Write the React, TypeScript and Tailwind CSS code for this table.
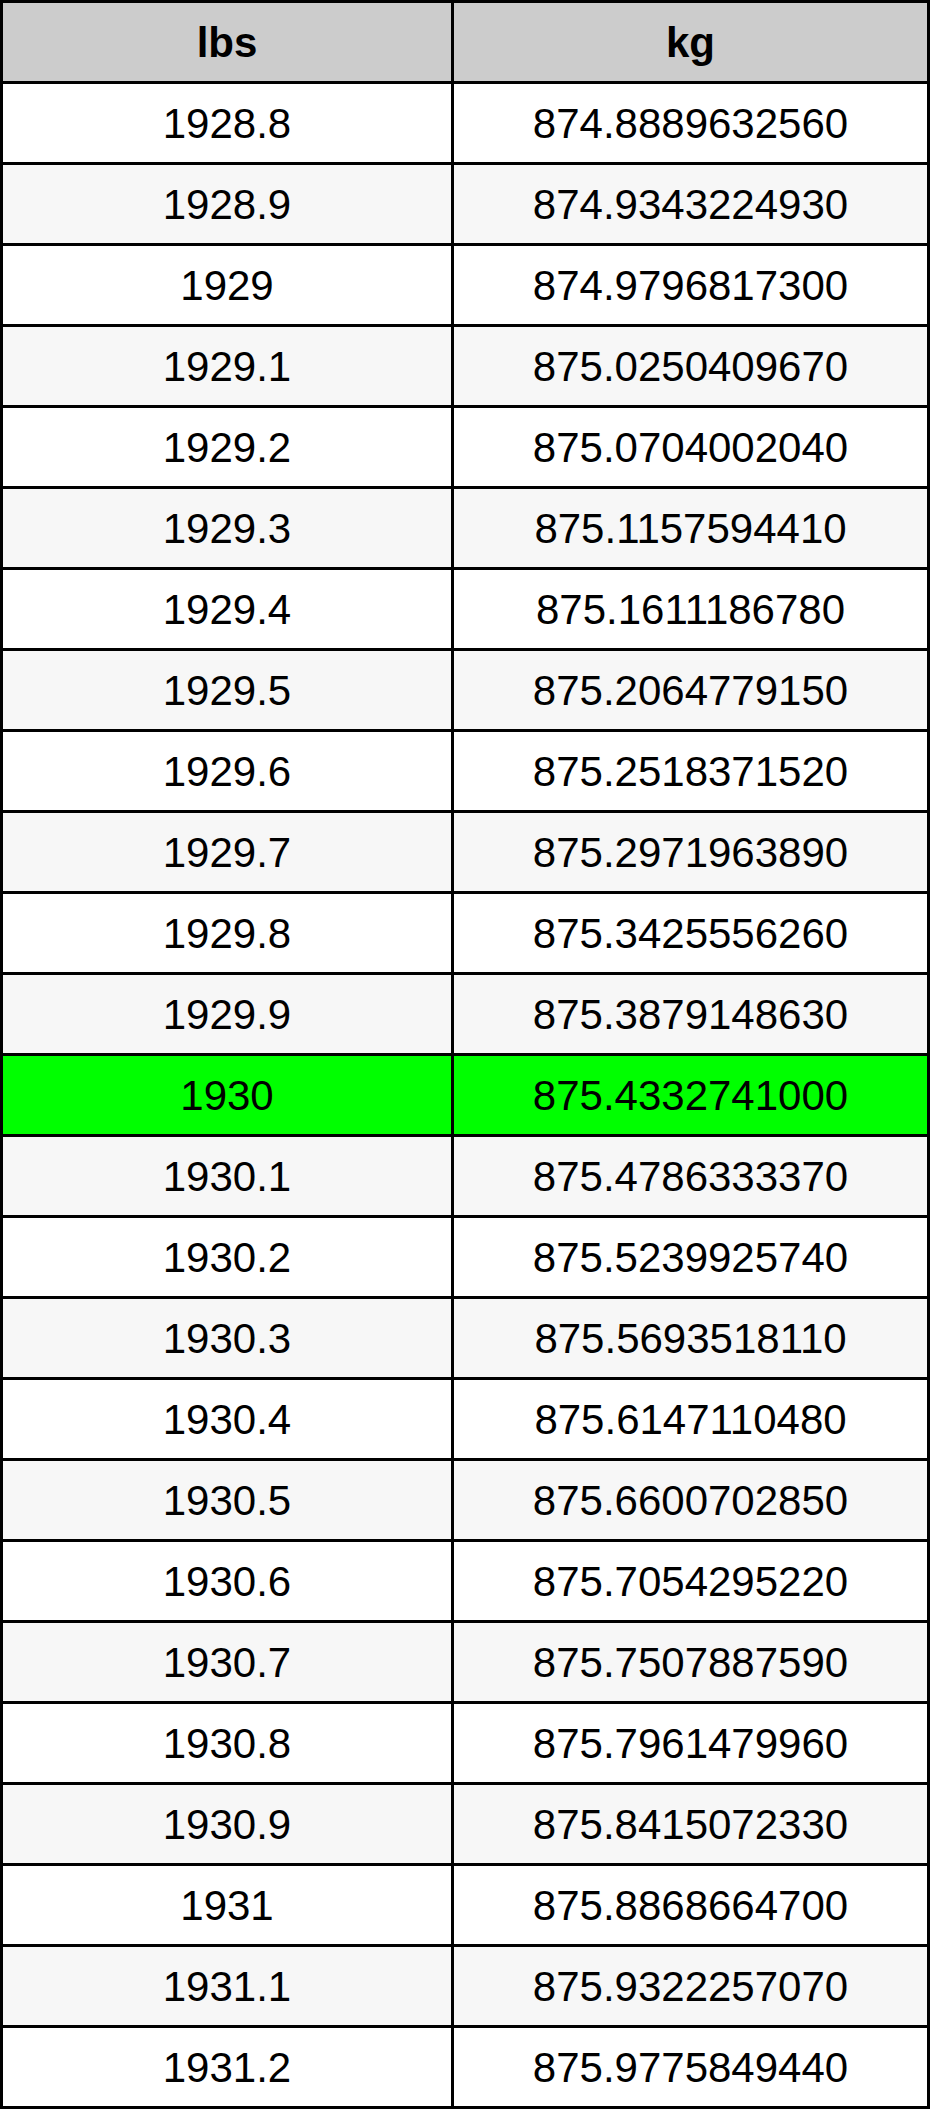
const rows: [string, string][] = [
  ['1928.8', '874.8889632560'],
  ['1928.9', '874.9343224930'],
  ['1929', '874.9796817300'],
  ['1929.1', '875.0250409670'],
  ['1929.2', '875.0704002040'],
  ['1929.3', '875.1157594410'],
  ['1929.4', '875.1611186780'],
  ['1929.5', '875.2064779150'],
  ['1929.6', '875.2518371520'],
  ['1929.7', '875.2971963890'],
  ['1929.8', '875.3425556260'],
  ['1929.9', '875.3879148630'],
  ['1930', '875.4332741000'],
  ['1930.1', '875.4786333370'],
  ['1930.2', '875.5239925740'],
  ['1930.3', '875.5693518110'],
  ['1930.4', '875.6147110480'],
  ['1930.5', '875.6600702850'],
  ['1930.6', '875.7054295220'],
  ['1930.7', '875.7507887590'],
  ['1930.8', '875.7961479960'],
  ['1930.9', '875.8415072330'],
  ['1931', '875.8868664700'],
  ['1931.1', '875.9322257070'],
  ['1931.2', '875.9775849440'],
];

export default function App() {
  return (
    <div className="w-[930px] bg-white font-['Liberation_Sans',Arial,sans-serif] text-[42px] text-black">
      <div className="border-[3px] border-black">
        <div className="flex h-[78px] bg-[#cccccc] font-bold">
          <div className="flex w-[448px] items-center justify-center">lbs</div>
          <div className="flex flex-1 items-center justify-center border-l-[3px] border-black">kg</div>
        </div>
        {rows.map(([lbs, kg], i) => {
          const bg = lbs === '1930' ? 'bg-[#00ff00]' : i % 2 === 1 ? 'bg-[#f7f7f7]' : 'bg-white';
          return (
            <div key={lbs} className={`flex h-[81px] border-t-[3px] border-black ${bg}`}>
              <div className="flex w-[448px] items-center justify-center">{lbs}</div>
              <div className="flex flex-1 items-center justify-center border-l-[3px] border-black">{kg}</div>
            </div>
          );
        })}
      </div>
    </div>
  );
}
